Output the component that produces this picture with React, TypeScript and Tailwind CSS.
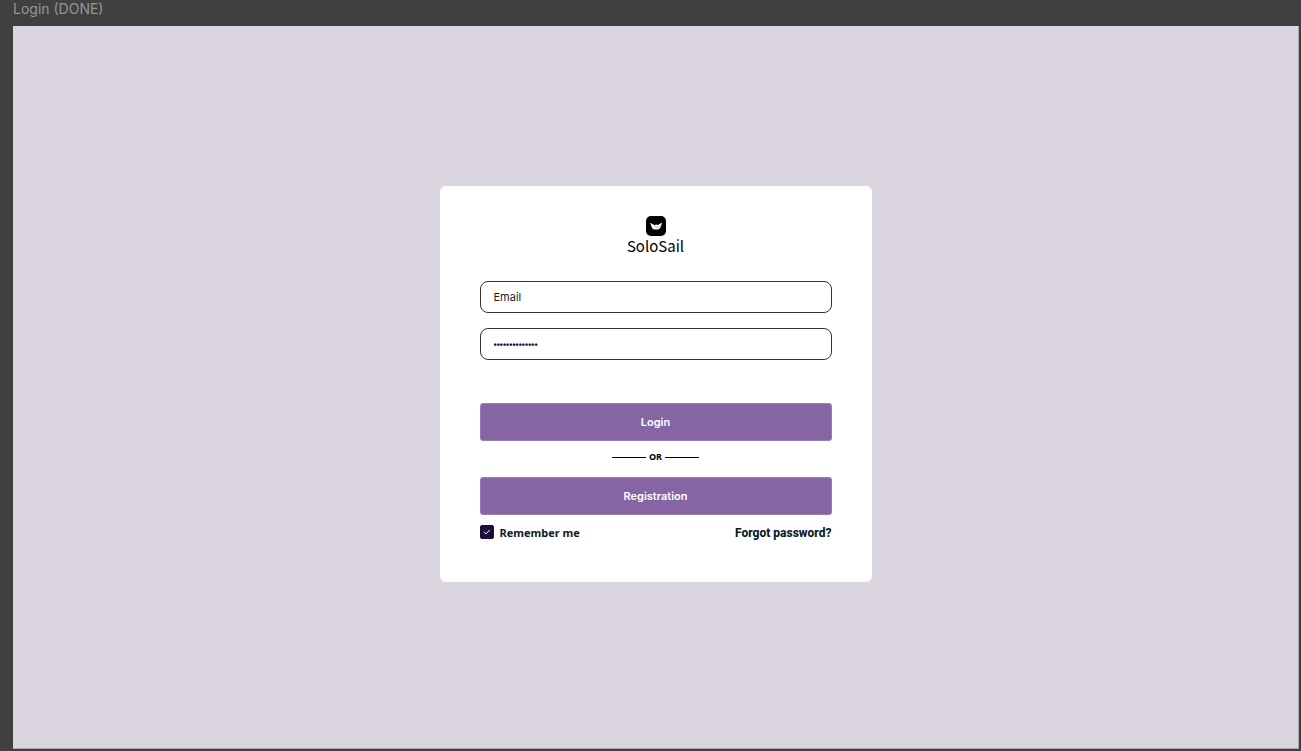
import { useState } from "react";

function Logo() {
  return (
    <div className="flex flex-col items-center">
      <svg width="20" height="20" viewBox="0 0 20 20" aria-hidden="true">
        <rect width="20" height="20" rx="5" fill="#000" />
        <path d="M4.2 6.8 8.6 9.2 10 8.5l2 .5 4.2-2.4-1.9 5.4-2 1.4H7.8L6 12z" fill="#fff" />
        <path d="m8.4 9.4 2 1.8 1.6.4 2.4-2.2" fill="none" stroke="#888" strokeWidth=".6" />
      </svg>
      <h1 className="font-['Noto_Sans_CJK_JP',sans-serif] text-[15px] leading-5 text-black">SoloSail</h1>
    </div>
  );
}

const fieldClass =
  "block h-8 w-full rounded-lg border border-[#333238] bg-white px-[13px] text-[#1b1b1f] outline-none";
const buttonClass =
  "block h-[38px] w-full rounded-[3px] border border-[#9b7db4] bg-[#8665a5] text-[11px] font-semibold leading-4 text-white";

export default function App() {
  const [email, setEmail] = useState("Email");
  const [password, setPassword] = useState("solosailing123");
  const [remember, setRemember] = useState(true);

  return (
    <div className="flex min-h-screen flex-col bg-[#404040] pr-0.5 pb-0.5 pl-[13px] font-['Inter',sans-serif]">
      <p className="h-[26px] text-sm leading-[18px] text-[#969696]">Login (DONE)</p>
      <main className="flex grow flex-col items-center border-r border-b border-[#aaa6ae] bg-[#dbd5e0] px-4 py-40">
        <form
          className="flex w-full max-w-[432px] flex-col rounded-md bg-white px-10 pt-[30px] pb-[41px]"
          onSubmit={(e) => e.preventDefault()}
        >
          <Logo />
          <div className="mt-[25px] flex flex-col gap-[15px]">
            <input
              className={`${fieldClass} text-[11px]`}
              type="text"
              aria-label="Email"
              value={email}
              onChange={(e) => setEmail(e.target.value)}
            />
            <input
              className={`${fieldClass} pt-0.5 font-['Liberation_Sans',sans-serif] text-[9px] font-bold text-[#1e0e42]`}
              type="password"
              aria-label="Password"
              value={password}
              onChange={(e) => setPassword(e.target.value)}
            />
          </div>
          <button type="submit" className={`${buttonClass} mt-[43px]`}>
            Login
          </button>
          <div className="flex h-9 items-center justify-center gap-[3px] pb-1 font-['Noto_Sans',sans-serif] text-[9px] font-bold text-black">
            <span className="h-px w-[34px] bg-black" />
            OR
            <span className="h-px w-[34px] bg-black" />
          </div>
          <button type="button" className={buttonClass}>
            Registration
          </button>
          <div className="mt-2.5 flex items-center justify-between text-[11px] leading-4 text-[#0f1c28]">
            <label className="flex items-center gap-1.5 font-['Noto_Sans',sans-serif] font-bold">
              <span className="grid pb-0.5">
                <input
                  type="checkbox"
                  className="col-start-1 row-start-1 size-[14px] appearance-none rounded-[2px] border border-[#1e0e3c] checked:bg-[#1e0e3c]"
                  checked={remember}
                  onChange={(e) => setRemember(e.target.checked)}
                />
                {remember && (
                  <svg
                    className="pointer-events-none col-start-1 row-start-1"
                    width="14"
                    height="14"
                    viewBox="0 0 14 14"
                    aria-hidden="true"
                  >
                    <path d="m4.2 7.2 1.8 1.6L9.8 5" fill="none" stroke="#fff" strokeWidth="1" />
                  </svg>
                )}
              </span>
              Remember me
            </label>
            <a href="#forgot" className="font-['Roboto',sans-serif] text-xs font-extrabold">
              Forgot password?
            </a>
          </div>
        </form>
      </main>
    </div>
  );
}
